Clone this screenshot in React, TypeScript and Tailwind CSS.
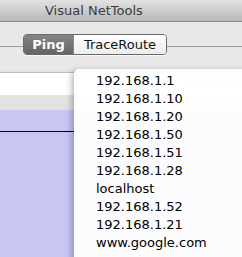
const hosts = [
  '192.168.1.1',
  '192.168.1.10',
  '192.168.1.20',
  '192.168.1.50',
  '192.168.1.51',
  '192.168.1.28',
  'localhost',
  '192.168.1.52',
  '192.168.1.21',
  'www.google.com',
]

export default function App() {
  return (
    <div className="relative w-[242px] h-[257px] overflow-hidden bg-[#e8e8e8] font-['DejaVu_Sans',sans-serif]">
      {/* title bar */}
      <div className="h-[22px] bg-gradient-to-b from-[#e2e2e2] to-[#b9b9b9] border-b border-[#8a8a8a] flex items-center">
        <span className="pl-[45px] text-[13px] text-[#3b3b3b] leading-none">Visual NetTools</span>
      </div>

      {/* toolbar with segmented control */}
      <div className="relative h-[48px]">
        <div className="absolute left-0 right-0 top-[24px] h-px bg-[#9c9c9c]" />
        <div className="absolute left-[23px] top-[12px] flex h-[21px] rounded-[4px] border border-[#6a6a6a] overflow-hidden shadow-[0_1px_0_rgba(255,255,255,0.7)]">
          <div className="w-[49px] flex items-center justify-center bg-gradient-to-b from-[#858585] to-[#656565] text-white font-bold text-[13px]">
            Ping
          </div>
          <div className="w-[93px] flex items-center justify-center bg-gradient-to-b from-[#ffffff] to-[#ececec] border-l border-[#8a8a8a] text-[#111] text-[13px]">
            TraceRoute
          </div>
        </div>
      </div>

      {/* content under the control */}
      <div className="bg-[#e2e2e2] h-[187px] flex flex-col">
        <div className="h-[2px]" />
        <div className="h-[23px] bg-white border-t border-[#bdbdbd]" />
        <div className="h-[15px]" />
        <div className="flex-1 bg-[#c8c6f2] pt-[21px]">
          <div className="h-px w-[75px] bg-black" />
        </div>
      </div>

      {/* faint label behind menu */}
      <div className="absolute left-[184px] top-[70px] text-[13px] text-[#c8c8c8] whitespace-nowrap">Interval (sec)</div>

      {/* popup menu */}
      <div className="absolute left-[74px] top-[69px] w-[200px] h-[210px] bg-white/95 rounded-tl-[5px] shadow-[-2px_2px_6px_rgba(0,0,0,0.3)] pt-[2px]">
        {hosts.map((h) => (
          <div key={h} className="h-[18px] pl-[22px] flex items-center text-[13px] text-black leading-none">
            {h}
          </div>
        ))}
      </div>
    </div>
  )
}
